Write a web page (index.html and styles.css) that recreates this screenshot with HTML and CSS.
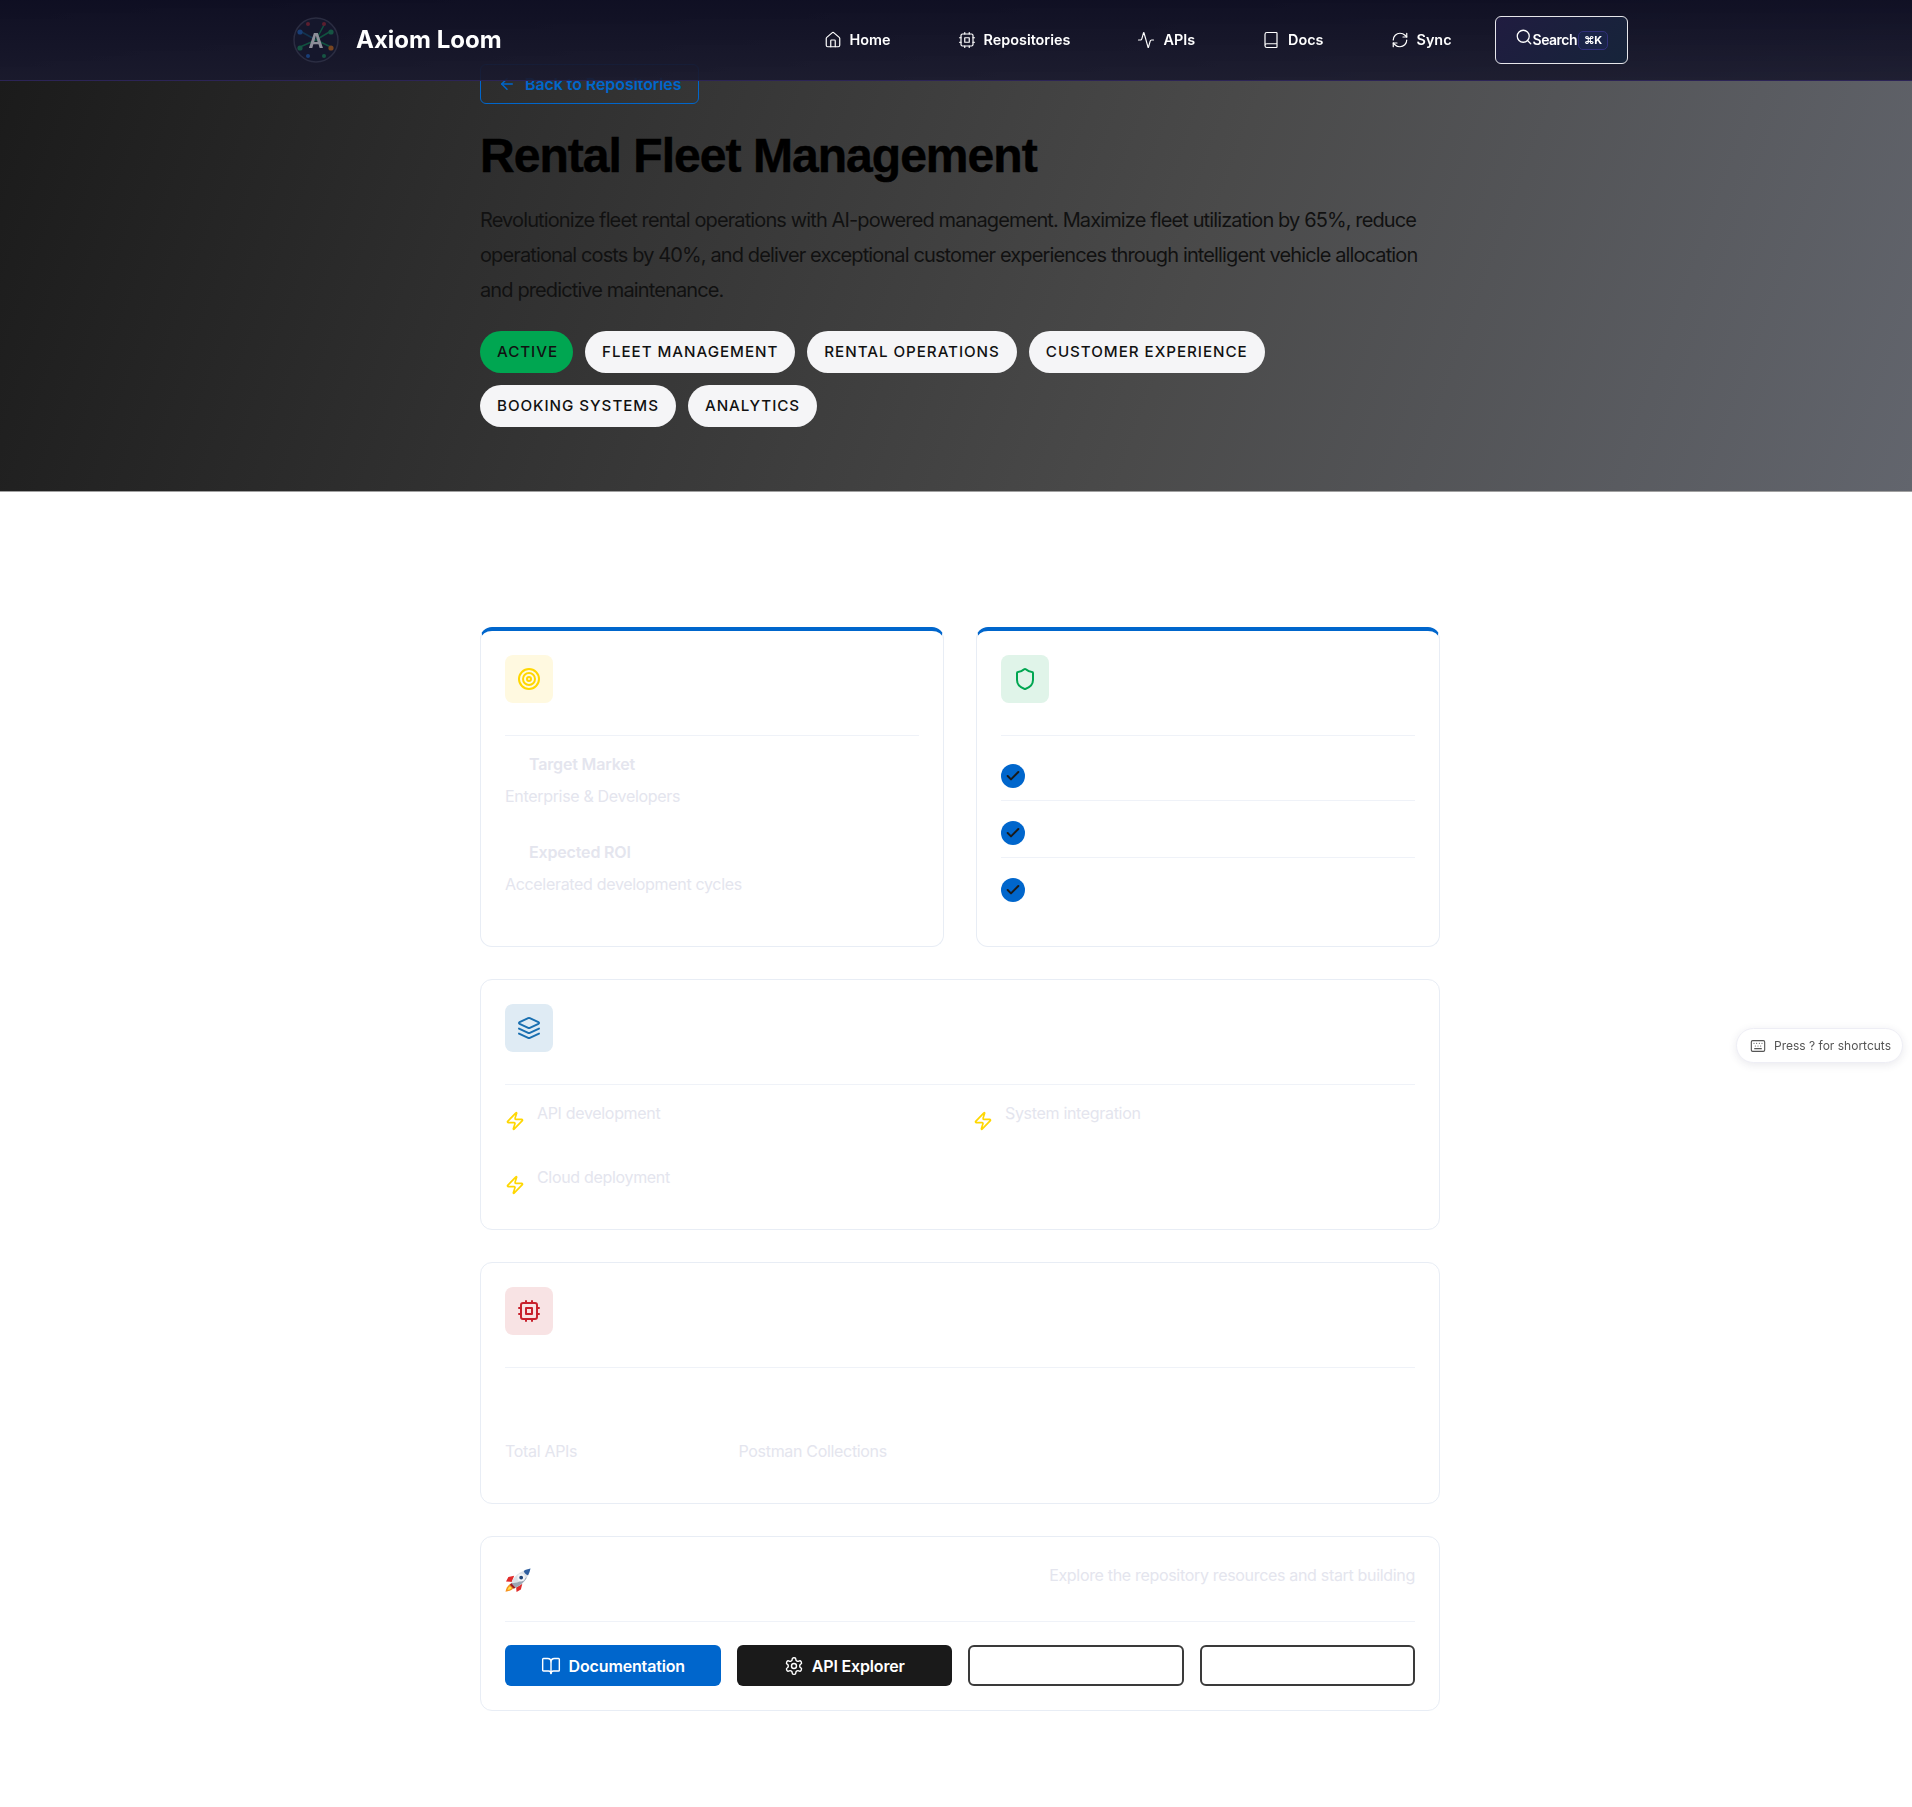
FILE: index.html
```html
<!DOCTYPE html>
<html lang="en">
<head>
    <meta charset="UTF-8">
    <meta name="viewport" content="width=device-width, initial-scale=1.0">
    <title>Rental Fleet Management</title>
    <link rel="stylesheet" href="styles.css">
</head>
<body>

    <svg class="sprites" width="0" height="0">
        <symbol id="i-check" viewBox="0 0 24 24"><path d="M20 6 9 17l-5-5"/></symbol>
        <symbol id="i-zap" viewBox="0 0 24 24"><path d="M4 14a1 1 0 0 1-.78-1.63l9.9-10.2a.5.5 0 0 1 .86.46l-1.92 6.02A1 1 0 0 0 13 10h7a1 1 0 0 1 .78 1.63l-9.9 10.2a.5.5 0 0 1-.86-.46l1.92-6.02A1 1 0 0 0 11 14z"/></symbol>
        <symbol id="i-cpu" viewBox="0 0 24 24"><rect x="4" y="4" width="16" height="16" rx="2"/><rect x="9" y="9" width="6" height="6"/><path d="M15 2v2M15 20v2M2 15h2M2 9h2M20 15h2M20 9h2M9 2v2M9 20v2"/></symbol>
    </svg>

    <!-- top bar stays over the page -->
    <header class="topbar">
        <a class="brand" href="#">
            <svg class="brand-logo" viewBox="0 0 46 46">
                <circle cx="23" cy="23" r="22" fill="#15172c" stroke="#2b2d42" stroke-width="1.5"/>
                <g class="brand-net">
                    <g stroke-width="1.5">
                        <path d="M23 23 31 8" stroke="#0f6b48"/>
                        <path d="M23 23 38 14" stroke="#0f6b48"/>
                        <path d="M23 23 38 30" stroke="#0f6b48"/>
                        <path d="M23 23 7 14" stroke="#12405f"/>
                        <path d="M23 23 7 30" stroke="#0f6b48"/>
                    </g>
                    <circle cx="15" cy="7" r="2" fill="#7a2130"/>
                    <circle cx="31" cy="7" r="2" fill="#7a2130"/>
                    <circle cx="7" cy="15" r="2.6" fill="#1a4f96"/>
                    <circle cx="38" cy="15" r="2.6" fill="#17704d"/>
                    <circle cx="7" cy="31" r="2.6" fill="#17704d"/>
                    <circle cx="38" cy="31" r="2.6" fill="#a2591c"/>
                    <circle cx="15" cy="39" r="2" fill="#1a4f96"/>
                    <circle cx="31" cy="39" r="2" fill="#17704d"/>
                </g>
                <text class="brand-letter" x="23" y="31" text-anchor="middle">A</text>
            </svg>
            <span class="brand-name">Axiom Loom</span>
        </a>
        <nav class="main-nav">
            <a href="#">
                <svg class="nav-icon" viewBox="0 0 24 24"><path d="M15 21v-8a1 1 0 0 0-1-1h-4a1 1 0 0 0-1 1v8"/><path d="M3 10a2 2 0 0 1 .709-1.528l7-5.999a2 2 0 0 1 2.582 0l7 5.999A2 2 0 0 1 21 10v9a2 2 0 0 1-2 2H5a2 2 0 0 1-2-2z"/></svg>
                Home
            </a>
            <a href="#">
                <svg class="nav-icon"><use href="#i-cpu"/></svg>
                Repositories
            </a>
            <a href="#">
                <svg class="nav-icon" viewBox="0 0 24 24"><path d="M22 12h-2.48a2 2 0 0 0-1.93 1.46l-2.35 8.36a.25.25 0 0 1-.48 0L9.24 2.18a.25.25 0 0 0-.48 0l-2.35 8.36A2 2 0 0 1 4.49 12H2"/></svg>
                APIs
            </a>
            <a href="#">
                <svg class="nav-icon" viewBox="0 0 24 24"><path d="M4 19.5v-15A2.5 2.5 0 0 1 6.5 2H19a1 1 0 0 1 1 1v18a1 1 0 0 1-1 1H6.5a1 1 0 0 1 0-5H20"/></svg>
                Docs
            </a>
            <a href="#">
                <svg class="nav-icon" viewBox="0 0 24 24"><path d="M3 12a9 9 0 0 1 9-9 9.75 9.75 0 0 1 6.74 2.74L21 8"/><path d="M21 3v5h-5"/><path d="M21 12a9 9 0 0 1-9 9 9.75 9.75 0 0 1-6.74-2.74L3 16"/><path d="M8 16H3v5"/></svg>
                Sync
            </a>
        </nav>
        <button class="search-btn">
            <svg class="search-icon" viewBox="0 0 24 24"><circle cx="11" cy="11" r="8"/><path d="m21 21-4.3-4.3"/></svg>
            <span>Search</span>
            <kbd>⌘K</kbd>
        </button>
    </header>

    <section class="hero">
        <div class="wrap">
            <a class="back-link" href="#">
                <svg class="back-icon" viewBox="0 0 24 24"><path d="m12 19-7-7 7-7"/><path d="M19 12H5"/></svg>
                Back to Repositories
            </a>
            <h1>Rental Fleet Management</h1>
            <p class="hero-text">Revolutionize fleet rental operations with AI-powered management. Maximize fleet utilization by 65%, reduce operational costs by 40%, and deliver exceptional customer experiences through intelligent vehicle allocation and predictive maintenance.</p>
            <div class="tags">
                <span class="tag tag-active">Active</span>
                <span class="tag">Fleet Management</span>
                <span class="tag">Rental Operations</span>
                <span class="tag">Customer Experience</span>
                <span class="tag">Booking Systems</span>
                <span class="tag">Analytics</span>
            </div>
        </div>
    </section>

    <main class="wrap content">
        <div class="two-col">
            <section class="card card-accent">
                <div class="card-head">
                    <div class="card-icon icon-yellow">
                        <svg viewBox="0 0 24 24"><circle cx="12" cy="12" r="10"/><circle cx="12" cy="12" r="6"/><circle cx="12" cy="12" r="2"/></svg>
                    </div>
                </div>
                <div class="info-item">
                    <h3>Target Market</h3>
                    <p>Enterprise &amp; Developers</p>
                </div>
                <div class="info-item">
                    <h3>Expected ROI</h3>
                    <p>Accelerated development cycles</p>
                </div>
            </section>

            <section class="card card-accent">
                <div class="card-head">
                    <div class="card-icon icon-green">
                        <svg viewBox="0 0 24 24"><path d="M20 13c0 5-3.5 7.5-7.66 8.95a1 1 0 0 1-.67-.01C7.5 20.5 4 18 4 13V6a1 1 0 0 1 1-1c2 0 4.5-1.2 6.24-2.72a1.17 1.17 0 0 1 1.52 0C14.51 3.81 17 5 19 5a1 1 0 0 1 1 1z"/></svg>
                    </div>
                </div>
                <ul class="check-list">
                    <li><span class="check"><svg><use href="#i-check"/></svg></span></li>
                    <li><span class="check"><svg><use href="#i-check"/></svg></span></li>
                    <li><span class="check"><svg><use href="#i-check"/></svg></span></li>
                </ul>
            </section>
        </div>

        <section class="card">
            <div class="card-head">
                <div class="card-icon icon-blue">
                    <svg viewBox="0 0 24 24"><path d="m12.83 2.18a2 2 0 0 0-1.66 0L2.6 6.08a1 1 0 0 0 0 1.83l8.58 3.91a2 2 0 0 0 1.66 0l8.58-3.9a1 1 0 0 0 0-1.83Z"/><path d="m22 17.65-9.17 4.16a2 2 0 0 1-1.66 0L2 17.65"/><path d="m22 12.65-9.17 4.16a2 2 0 0 1-1.66 0L2 12.65"/></svg>
                </div>
            </div>
            <div class="features">
                <div class="feature"><svg><use href="#i-zap"/></svg><span>API development</span></div>
                <div class="feature"><svg><use href="#i-zap"/></svg><span>System integration</span></div>
                <div class="feature"><svg><use href="#i-zap"/></svg><span>Cloud deployment</span></div>
            </div>
        </section>

        <section class="card">
            <div class="card-head">
                <div class="card-icon icon-red">
                    <svg><use href="#i-cpu"/></svg>
                </div>
            </div>
            <div class="stats">
                <div class="stat-label">Total APIs</div>
                <div class="stat-label">Postman Collections</div>
            </div>
        </section>

        <section class="card">
            <div class="action-head">
                <!-- rocket emoji, drawn because no emoji font is available -->
                <svg class="rocket" viewBox="0 0 27 25">
                    <path d="M5 17C2.500 18.500 .8 22 .5 24.800 3.500 24.500 7.500 23 9 20.500Z" fill="#f7941d"/>
                    <path d="M5 19C3.500 20.500 2.800 22 2.500 23 4 22.800 6 22 7 20.800Z" fill="#ffe14d"/>
                    <path d="M9.500 8 3.500 9.500 1 14 7 14.500Z" fill="#e02b2b"/>
                    <path d="M18 16.500 16.500 22.500 12 25 11.500 19.500Z" fill="#e02b2b"/>
                    <path d="M6.500 15.500C9 9 15 3 26.500 .5 24 11.500 18 17.500 11 20.500Z" fill="#dde2e8"/>
                    <path d="M6.500 15.500 11 20.500C15 19 20 15 23 9.500 18 14 12 16.500 6.500 15.500Z" fill="#9aa6b4"/>
                    <path d="M26.500 .5C25.800 3.500 25 5.500 24 7.500 22 6.800 20 5 19.500 3 21.500 1.800 24 1 26.500 .5Z" fill="#2f5fa0"/>
                    <circle cx="16.800" cy="10" r="3" fill="#1f4477" stroke="#f2f4f7"/>
                    <path d="M6.500 15.500 11 20.500 9 21.500 5 17.500Z" fill="#9c1f24"/>
                </svg>
                <p>Explore the repository resources and start building</p>
            </div>
            <div class="actions">
                <a class="btn btn-blue" href="#">
                    <svg viewBox="0 0 24 24"><path d="M12 7v14"/><path d="M3 18a1 1 0 0 1-1-1V4a1 1 0 0 1 1-1h5a4 4 0 0 1 4 4 4 4 0 0 1 4-4h5a1 1 0 0 1 1 1v13a1 1 0 0 1-1 1h-6a3 3 0 0 0-3 3 3 3 0 0 0-3-3z"/></svg>
                    Documentation
                </a>
                <a class="btn btn-dark" href="#">
                    <svg viewBox="0 0 24 24"><path d="M12.22 2h-.44a2 2 0 0 0-2 2v.18a2 2 0 0 1-1 1.730l-.43.25a2 2 0 0 1-2 0l-.15-.08a2 2 0 0 0-2.730.73l-.22.38a2 2 0 0 0 .73 2.730l.15.1a2 2 0 0 1 1 1.720v.51a2 2 0 0 1-1 1.740l-.15.09a2 2 0 0 0-.73 2.730l.22.38a2 2 0 0 0 2.730.73l.15-.08a2 2 0 0 1 2 0l.43.25a2 2 0 0 1 1 1.730V20a2 2 0 0 0 2 2h.44a2 2 0 0 0 2-2v-.18a2 2 0 0 1 1-1.730l.43-.25a2 2 0 0 1 2 0l.15.08a2 2 0 0 0 2.730-.73l.22-.39a2 2 0 0 0-.73-2.730l-.15-.08a2 2 0 0 1-1-1.740v-.5a2 2 0 0 1 1-1.740l.15-.09a2 2 0 0 0 .73-2.730l-.22-.38a2 2 0 0 0-2.730-.73l-.15.08a2 2 0 0 1-2 0l-.43-.25a2 2 0 0 1-1-1.730V4a2 2 0 0 0-2-2z"/><circle cx="12" cy="12" r="3"/></svg>
                    API Explorer
                </a>
                <a class="btn btn-outline" href="#"></a>
                <a class="btn btn-outline" href="#"></a>
            </div>
        </section>
    </main>

    <div class="shortcut-hint">
        <svg viewBox="0 0 24 24"><path d="M10 8h.01M12 12h.01M14 8h.01M16 12h.01M18 8h.01M6 8h.01M7 16h10M8 12h.01"/><rect x="2" y="4" width="20" height="16" rx="2"/></svg>
        Press ? for shortcuts
    </div>

</body>
</html>
```

FILE: styles.css
```css
* {
    box-sizing: border-box;
}

body {
    margin: 0;
    min-height: 1807px;
    background: white;
    color: #1a1a1a;
    font-family: Inter, "Noto Sans", sans-serif;
    font-size: 16px;
    line-height: 24px;
}

a {
    text-decoration: none;
}

svg {
    fill: none;
    stroke: currentColor;
    stroke-width: 2;
    stroke-linecap: round;
    stroke-linejoin: round;
}

.sprites {
    position: absolute;
}

.wrap {
    width: 960px;
    margin-left: 480px;
}

/* top bar */
.topbar {
    position: fixed;
    top: 0;
    left: 0;
    right: 0;
    z-index: 10;
    height: 81px;
    display: flex;
    align-items: center;
    padding: 0 284px 0 293px;
    background: linear-gradient(180deg, rgba(15, 15, 35, 0.98), rgba(26, 26, 46, 0.92));
    border-bottom: 1px solid #2c2456;
}

.brand {
    display: flex;
    align-items: center;
    gap: 17px;
    margin-right: 322px;
}

.brand-logo {
    width: 46px;
    height: 46px;
    stroke: none;
}

.brand-net {
    opacity: 0.7;
}

.brand-letter {
    fill: #8d8e99;
    font-family: Inter, sans-serif;
    font-size: 20px;
    font-weight: 700;
}

.brand-name {
    color: white;
    font-size: 24px;
    font-weight: 700;
    white-space: nowrap;
}

.main-nav {
    display: flex;
    align-items: center;
    gap: 67px;
    margin-right: 43px;
}

.main-nav a {
    display: flex;
    align-items: center;
    gap: 8px;
    color: white;
    font-size: 14.4px;
    font-weight: 600;
    white-space: nowrap;
}

.nav-icon {
    width: 18px;
    height: 18px;
    stroke-width: 1.6;
}

.search-btn {
    display: flex;
    align-items: center;
    width: 133px;
    height: 48px;
    padding: 0 0 0 19px;
    background: linear-gradient(135deg, #201c40, #16243a);
    border: 1px solid #e6e6ea;
    border-radius: 6px;
    color: white;
    font-family: inherit;
    font-size: 14px;
    font-weight: 600;
    letter-spacing: -0.5px;
}

.search-btn span {
    margin-top: -2px;
}

.search-icon {
    flex: none;
    width: 18px;
    height: 18px;
    margin: -6px 0 0 0;
    stroke-width: 1.7;
}

.search-btn kbd {
    margin-left: 1px;
    padding: 1px 5px;
    background: #1a2448;
    border: 1px solid #31307a;
    border-radius: 5px;
    font-family: inherit;
    font-size: 11px;
    font-weight: 700;
    line-height: 15px;
}

/* hero */
.hero {
    height: 492px;
    padding-top: 64px;
    background: linear-gradient(110deg, #1a1a1a 0%, #4a4a4a 62%, #62656d 100%);
    border-bottom: 1px solid #a0a0a0;
}

.back-link {
    display: inline-flex;
    align-items: center;
    gap: 9px;
    height: 40px;
    padding: 0 17px;
    border: 1px solid #0066cc;
    border-radius: 6px;
    color: #0066cc;
    font-size: 16px;
    font-weight: 600;
    letter-spacing: -0.005em;
}

.back-icon {
    width: 18px;
    height: 18px;
}

.hero h1 {
    margin: 23px 0 0;
    color: black;
    font-family: "Liberation Sans", Arial, sans-serif;
    font-size: 48px;
    font-weight: 700;
    letter-spacing: -0.02em;
    line-height: 58px;
    -webkit-text-stroke: 0.5px black;
}

.hero-text {
    width: 960px;
    margin: 18px 0 0;
    color: #111;
    font-size: 20px;
    letter-spacing: -0.88px;
    line-height: 35.2px;
}

.tags {
    display: flex;
    flex-wrap: wrap;
    gap: 12px;
    margin-top: 22px;
}

.tag {
    height: 42px;
    padding: 0 17px;
    background: #f5f5f7;
    border-radius: 21px;
    color: #111;
    font-size: 15.2px;
    font-weight: 500;
    letter-spacing: 0.95px;
    line-height: 42px;
    text-transform: uppercase;
}

.tag-active {
    padding-right: 15px;
    background: #00a651;
}

/* cards */
.content {
    display: flex;
    flex-direction: column;
    gap: 32px;
    padding-top: 135px;
}

.two-col {
    display: grid;
    grid-template-columns: 1fr 1fr;
    gap: 32px;
}

.card {
    padding: 24px;
    background: white;
    border: 1px solid #e8edf5;
    border-radius: 12px;
}

.card-accent {
    border-top: 4px solid #0066cc;
}

.card-head {
    padding-bottom: 32px;
    border-bottom: 1px solid #eff2f8;
}

.card-icon {
    display: flex;
    align-items: center;
    justify-content: center;
    width: 48px;
    height: 48px;
    border-radius: 8px;
}

.card-icon svg {
    width: 24px;
    height: 24px;
}

.icon-yellow {
    background: #fff9e0;
    color: #ffd700;
}

.icon-green {
    background: #e0f4e9;
    color: #00a651;
}

.icon-blue {
    background: #dfebf4;
    color: #1a6fb0;
}

.icon-red {
    background: #f8e3e4;
    color: #c8202c;
}

.info-item {
    margin-top: 16px;
    color: #e4e5ee;
}

.info-item + .info-item {
    margin-top: 32px;
}

.info-item h3 {
    margin: 0 0 8px 24px;
    font-size: 16px;
    font-weight: 600;
    letter-spacing: -0.01em;
}

.info-item p {
    margin: 0;
    letter-spacing: -0.02em;
}

.check-list {
    margin: 16px 0 0;
    padding: 0;
    list-style: none;
}

.check-list li {
    display: flex;
    margin-bottom: 8px;
    padding: 12px 0;
    border-bottom: 1px solid #eff2f8;
}

.check-list li:last-child {
    border-bottom: none;
}

.check {
    display: flex;
    align-items: center;
    justify-content: center;
    width: 24px;
    height: 24px;
    background: #0066cc;
    border-radius: 50%;
    color: #1a1a1a;
}

.check svg {
    width: 16px;
    height: 16px;
    stroke-width: 3;
}

.features {
    display: grid;
    grid-template-columns: 1fr 1fr;
    gap: 34px 26px;
    padding: 16px 0 10px;
}

.feature {
    display: flex;
    gap: 12px;
    color: #e4e5ee;
    letter-spacing: -0.02em;
}

.feature svg {
    flex: none;
    width: 20px;
    height: 20px;
    margin-top: 10px;
    color: #ffd700;
}

.stats {
    display: grid;
    grid-template-columns: repeat(4, 1fr);
    gap: 24px;
    padding: 71px 0 16px;
}

.stat-label {
    color: #e4e5ee;
    letter-spacing: -0.02em;
}

.action-head {
    display: flex;
    justify-content: space-between;
    height: 61px;
    border-bottom: 1px solid #eff2f8;
}

.rocket {
    width: 26px;
    height: 24px;
    margin-top: 7px;
    stroke: none;
}

.action-head p {
    margin: 2px 0 0;
    color: #e4e5ee;
    letter-spacing: -0.02em;
}

.actions {
    display: grid;
    grid-template-columns: repeat(4, 1fr);
    gap: 16px;
    margin-top: 23px;
}

.btn {
    display: flex;
    align-items: center;
    justify-content: center;
    gap: 8px;
    height: 41px;
    border-radius: 6px;
    color: white;
    font-size: 16px;
    font-weight: 600;
    letter-spacing: -0.01em;
}

.btn svg {
    width: 20px;
    height: 20px;
    stroke-width: 1.7;
}

.btn-blue {
    background: #0066cc;
}

.btn-dark {
    background: #1a1a1a;
}

.btn-outline {
    border: 2px solid #3a3a3a;
}

/* shortcut hint */
.shortcut-hint {
    position: fixed;
    top: 1028px;
    right: 9px;
    display: flex;
    align-items: center;
    gap: 8px;
    height: 35px;
    padding: 0 11px 0 13px;
    background: white;
    border: 1px solid #eeeef5;
    border-radius: 18px;
    box-shadow: 0 2px 8px rgba(40, 40, 80, 0.1);
    color: #555;
    font-size: 12px;
}

.shortcut-hint svg {
    width: 16px;
    height: 16px;
    stroke-width: 1.7;
}
```
